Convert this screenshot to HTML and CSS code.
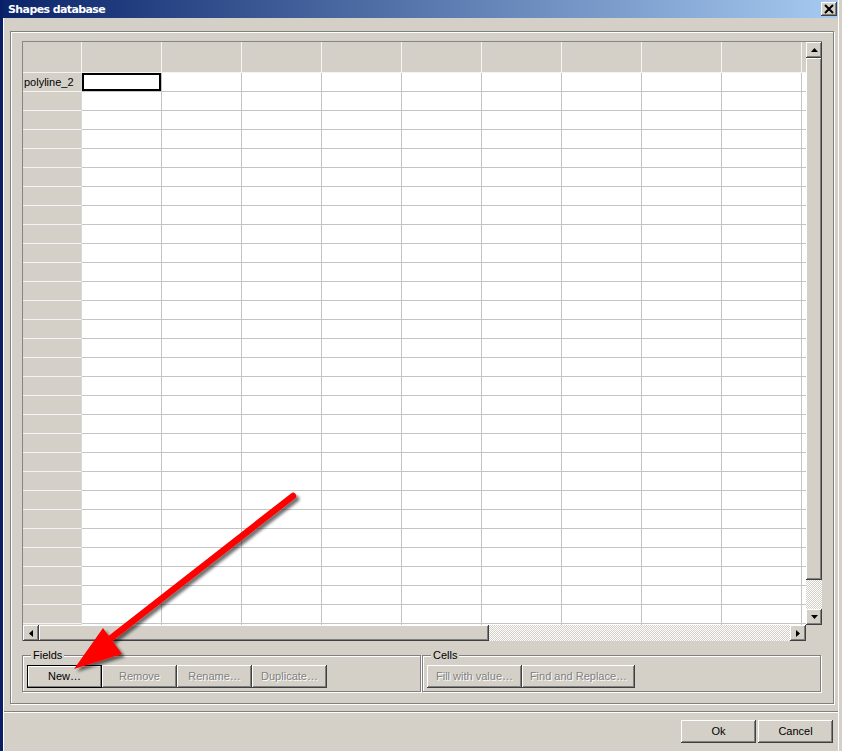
FILE: index.html
```html
<!DOCTYPE html>
<html>
<head>
<meta charset="utf-8">
<title>Shapes database</title>
<link rel="stylesheet" href="styles.css">
</head>
<body>
<div class="window">
  <div class="titlebar">
    <span class="title">Shapes database</span>
    <button class="close" aria-label="Close"><svg width="16" height="14" viewBox="0 0 16 14"><path d="M4 3 L12 11 M12 3 L4 11" stroke="#000" stroke-width="2" fill="none"/></svg></button>
  </div>
  <div class="client">
    <div class="panel">
      <div class="grid">
        <div class="sheet">
          <table>
            <thead>
              <tr><th class="rh"></th><th></th><th></th><th></th><th></th><th></th><th></th><th></th><th></th><th></th><th></th></tr>
            </thead>
            <tbody>
              <tr><th>polyline_2</th><td class="sel"></td><td></td><td></td><td></td><td></td><td></td><td></td><td></td><td></td><td></td></tr>
              <tr><th></th><td></td><td></td><td></td><td></td><td></td><td></td><td></td><td></td><td></td><td></td></tr>
              <tr><th></th><td></td><td></td><td></td><td></td><td></td><td></td><td></td><td></td><td></td><td></td></tr>
              <tr><th></th><td></td><td></td><td></td><td></td><td></td><td></td><td></td><td></td><td></td><td></td></tr>
              <tr><th></th><td></td><td></td><td></td><td></td><td></td><td></td><td></td><td></td><td></td><td></td></tr>
              <tr><th></th><td></td><td></td><td></td><td></td><td></td><td></td><td></td><td></td><td></td><td></td></tr>
              <tr><th></th><td></td><td></td><td></td><td></td><td></td><td></td><td></td><td></td><td></td><td></td></tr>
              <tr><th></th><td></td><td></td><td></td><td></td><td></td><td></td><td></td><td></td><td></td><td></td></tr>
              <tr><th></th><td></td><td></td><td></td><td></td><td></td><td></td><td></td><td></td><td></td><td></td></tr>
              <tr><th></th><td></td><td></td><td></td><td></td><td></td><td></td><td></td><td></td><td></td><td></td></tr>
              <tr><th></th><td></td><td></td><td></td><td></td><td></td><td></td><td></td><td></td><td></td><td></td></tr>
              <tr><th></th><td></td><td></td><td></td><td></td><td></td><td></td><td></td><td></td><td></td><td></td></tr>
              <tr><th></th><td></td><td></td><td></td><td></td><td></td><td></td><td></td><td></td><td></td><td></td></tr>
              <tr><th></th><td></td><td></td><td></td><td></td><td></td><td></td><td></td><td></td><td></td><td></td></tr>
              <tr><th></th><td></td><td></td><td></td><td></td><td></td><td></td><td></td><td></td><td></td><td></td></tr>
              <tr><th></th><td></td><td></td><td></td><td></td><td></td><td></td><td></td><td></td><td></td><td></td></tr>
              <tr><th></th><td></td><td></td><td></td><td></td><td></td><td></td><td></td><td></td><td></td><td></td></tr>
              <tr><th></th><td></td><td></td><td></td><td></td><td></td><td></td><td></td><td></td><td></td><td></td></tr>
              <tr><th></th><td></td><td></td><td></td><td></td><td></td><td></td><td></td><td></td><td></td><td></td></tr>
              <tr><th></th><td></td><td></td><td></td><td></td><td></td><td></td><td></td><td></td><td></td><td></td></tr>
              <tr><th></th><td></td><td></td><td></td><td></td><td></td><td></td><td></td><td></td><td></td><td></td></tr>
              <tr><th></th><td></td><td></td><td></td><td></td><td></td><td></td><td></td><td></td><td></td><td></td></tr>
              <tr><th></th><td></td><td></td><td></td><td></td><td></td><td></td><td></td><td></td><td></td><td></td></tr>
              <tr><th></th><td></td><td></td><td></td><td></td><td></td><td></td><td></td><td></td><td></td><td></td></tr>
              <tr><th></th><td></td><td></td><td></td><td></td><td></td><td></td><td></td><td></td><td></td><td></td></tr>
              <tr><th></th><td></td><td></td><td></td><td></td><td></td><td></td><td></td><td></td><td></td><td></td></tr>
              <tr><th></th><td></td><td></td><td></td><td></td><td></td><td></td><td></td><td></td><td></td><td></td></tr>
              <tr><th></th><td></td><td></td><td></td><td></td><td></td><td></td><td></td><td></td><td></td><td></td></tr>
              <tr><th></th><td></td><td></td><td></td><td></td><td></td><td></td><td></td><td></td><td></td><td></td></tr>
              <tr><th></th><td></td><td></td><td></td><td></td><td></td><td></td><td></td><td></td><td></td><td></td></tr>
            </tbody>
          </table>
        </div>
        <div class="vscroll">
          <div class="sbtn"><svg width="7" height="4" viewBox="0 0 7 4"><polygon points="3.5,0 7,4 0,4" fill="#000"/></svg></div>
          <div class="thumb vthumb"></div>
          <div class="track"></div>
          <div class="sbtn"><svg width="7" height="4" viewBox="0 0 7 4"><polygon points="0,0 7,0 3.5,4" fill="#000"/></svg></div>
        </div>
        <div class="hscroll">
          <div class="sbtn"><svg width="4" height="7" viewBox="0 0 4 7"><polygon points="4,0 4,7 0,3.5" fill="#000"/></svg></div>
          <div class="thumb hthumb"></div>
          <div class="track"></div>
          <div class="sbtn"><svg width="4" height="7" viewBox="0 0 4 7"><polygon points="0,0 4,3.5 0,7" fill="#000"/></svg></div>
        </div>
        <div class="corner"></div>
      </div>
      <div class="groups">
        <div class="group">
          <div class="legend"><span>Fields</span></div>
          <div class="btnrow">
            <button class="btn default w75">New…</button>
            <button class="btn w75" disabled>Remove</button>
            <button class="btn w75" disabled>Rename…</button>
            <button class="btn w75" disabled>Duplicate…</button>
          </div>
        </div>
        <div class="group">
          <div class="legend"><span>Cells</span></div>
          <div class="btnrow">
            <button class="btn w95" disabled>Fill with value…</button>
            <button class="btn w113" disabled>Find and Replace…</button>
          </div>
        </div>
      </div>
    </div>
    <div class="sep"></div>
    <div class="actions">
      <button class="btn w75">Ok</button>
      <button class="btn w75">Cancel</button>
    </div>
  </div>
</div>
<svg class="arrow" width="842" height="751" viewBox="0 0 842 751">
  <defs>
    <filter id="shadow" x="-20%" y="-20%" width="140%" height="140%">
      <feDropShadow dx="3" dy="3" stdDeviation="1.6" flood-color="#000" flood-opacity="0.55"/>
    </filter>
  </defs>
  <g filter="url(#shadow)">
    <line x1="293" y1="496" x2="106" y2="642" stroke="#ff0000" stroke-width="6.5" stroke-linecap="round"/>
    <polygon points="74,669 103,628 122,654" fill="#ff0000"/>
  </g>
</svg>
</body>
</html>
```

FILE: styles.css
```css
* { box-sizing: border-box; }

html, body {
  margin: 0;
  padding: 0;
}

body {
  width: 842px;
  height: 751px;
  overflow: hidden;
  background: #0a1e66;
  font-family: "Liberation Sans", Arial, sans-serif;
  font-size: 11px;
  color: #000;
  position: relative;
}

.window {
  margin-left: 3px;
  width: 839px;
  height: 751px;
  padding-right: 4px;
  background: #d4d0c8;
  display: flex;
  flex-direction: column;
  box-shadow: inset -3px 0 0 #d4d0c8, inset -4px 0 0 #ffffff, inset 1px 0 0 #ffffff;
}

.titlebar {
  height: 18px;
  flex: 0 0 18px;
  display: flex;
  align-items: center;
  justify-content: space-between;
  padding-left: 5px;
  background: linear-gradient(to right, #0a246a, #a6caf0);
}

.title {
  font-family: "DejaVu Sans", Verdana, sans-serif;
  font-weight: bold;
  font-size: 11px;
  color: #fff;
  letter-spacing: -0.6px;
}

.close {
  width: 16px;
  height: 14px;
  margin-right: 1px;
  padding: 0;
  border: 0;
  display: flex;
  align-items: center;
  justify-content: center;
  background: #d4d0c8;
  box-shadow: inset -1px -1px 0 #404040, inset 1px 1px 0 #ffffff, inset -2px -2px 0 #808080;
}

.client {
  flex: 1;
  display: flex;
  flex-direction: column;
}

.panel {
  margin: 13px 4px 0 7px;
  width: 824px;
  padding: 9px 11px 11px;
  border: 1px solid #808080;
  box-shadow: inset 1px 1px 0 #ffffff, 1px 1px 0 #ffffff;
  display: flex;
  flex-direction: column;
}

.grid {
  width: 800px;
  height: 600px;
  display: grid;
  grid-template-columns: 783px 16px;
  grid-template-rows: 583px 16px;
  border-top: 1px solid #868686;
  border-left: 1px solid #868686;
  background: #d4d0c8;
}

.sheet {
  overflow: hidden;
  background: #fff;
}

.sheet table {
  border-spacing: 0;
  border-collapse: separate;
  table-layout: fixed;
  width: 859px;
}

.sheet th,
.sheet td {
  padding: 0;
  height: 19px;
  border-right: 1px solid #c4c4c4;
  border-bottom: 1px solid #c4c4c4;
  line-height: 17px;
  white-space: nowrap;
  overflow: hidden;
}

.sheet th {
  background: #d4d0c8;
  border-color: #f4f4f4;
  font-weight: normal;
  text-align: left;
  padding-left: 1px;
  width: 80px;
}

.sheet thead th {
  height: 31px;
}

.sheet th.rh {
  width: 59px;
}

.sheet tbody th {
  border-right-color: #d8d8d8;
}

.sheet td.sel {
  box-shadow: inset 0 0 0 2px #000;
}

.vscroll {
  display: flex;
  flex-direction: column;
}

.hscroll {
  display: flex;
}

.sbtn {
  width: 16px;
  height: 16px;
  flex: 0 0 16px;
  display: flex;
  align-items: center;
  justify-content: center;
  background: #d4d0c8;
  box-shadow: inset -1px -1px 0 #404040, inset 1px 1px 0 #ffffff, inset -2px -2px 0 #808080;
}

.thumb {
  background: #d4d0c8;
  box-shadow: inset -1px -1px 0 #404040, inset 1px 1px 0 #ffffff, inset -2px -2px 0 #808080;
}

.vthumb { height: 522px; flex: 0 0 522px; }
.hthumb { width: 450px; flex: 0 0 450px; }

.track {
  flex: 1;
  background-color: #fff;
  background-image: repeating-conic-gradient(#d4d0c8 0 25%, #ffffff 0 50%);
  background-size: 2px 2px;
}

.corner {
  background: #d4d0c8;
}

.groups {
  display: flex;
  gap: 1px;
  margin-top: 14px;
}

.group {
  width: 399px;
  height: 37px;
  padding: 0 3px 3px 4px;
  border: 1px solid #808080;
  box-shadow: inset 1px 1px 0 #ffffff, 1px 1px 0 #ffffff;
  display: flex;
  flex-direction: column;
}

.legend {
  display: flex;
  height: 9px;
}

.legend span {
  margin-top: -7px;
  margin-left: 4px;
  padding: 0 2px;
  height: 13px;
  line-height: 13px;
  background: #d4d0c8;
}

.btnrow {
  display: flex;
}

.btn {
  height: 23px;
  padding: 0 0 1px;
  border: 0;
  background: #d4d0c8;
  font-family: "Liberation Sans", Arial, sans-serif;
  font-size: 11px;
  color: #000;
  text-align: center;
  box-shadow: inset -1px -1px 0 #404040, inset 1px 1px 0 #ffffff, inset -2px -2px 0 #808080;
}

.btn:disabled {
  color: #808080;
  text-shadow: 1px 1px 0 #ffffff;
}

.btn.default {
  border: 1px solid #000;
  box-shadow: inset -1px -1px 0 #808080, inset 1px 1px 0 #ffffff;
}

.w75 { width: 75px; }
.w95 { width: 95px; }
.w113 { width: 113px; }

.sep {
  margin: 7px 0 0 1px;
  border-top: 1px solid #808080;
  border-bottom: 1px solid #ffffff;
}

.actions {
  display: flex;
  justify-content: flex-end;
  gap: 2px;
  padding: 7px 5px 0 0;
}

.arrow {
  position: absolute;
  left: 0;
  top: 0;
  pointer-events: none;
}
```
